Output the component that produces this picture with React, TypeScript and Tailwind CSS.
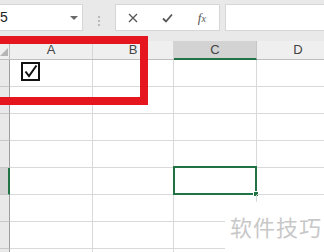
const cols = [
  { name: "A", w: "w-[83px]" },
  { name: "B", w: "w-[81px]" },
  { name: "C", w: "w-[83px]" },
  { name: "D", w: "w-[83px]" },
];

const rows = [1, 2, 3, 4, 5, 6, 7, 8];

const CheckedBox = () => (
  <svg width="19" height="19" viewBox="0 0 19 19" className="mt-[2px] ml-[11px]">
    <rect x="1" y="1" width="17" height="17" fill="none" stroke="#111" strokeWidth="2" />
    <path d="M4.5 9.5 L8 14 L15.5 3.5" fill="none" stroke="#111" strokeWidth="2" />
  </svg>
);

export default function App() {
  return (
    <div className="relative w-[324px] h-[252px] overflow-hidden bg-white font-['Liberation_Sans',sans-serif]">
      {/* formula bar */}
      <div className="flex h-[41px] bg-[#e9e9e9] pt-[4px]">
        <div className="flex h-[27px] w-[83px] shrink-0 items-center overflow-hidden border border-l-0 border-[#d6d6d6] bg-white">
          <span className="ml-[-10px] text-[14px] text-[#222]">C5</span>
          <span className="ml-auto mr-[4px] h-0 w-0 border-x-[4px] border-t-[4px] border-x-transparent border-t-[#6a6a6a]" />
        </div>
        <div className="flex w-[32px] shrink-0 flex-col items-center justify-center gap-[2px] pb-[3px]">
          <span className="h-[2px] w-[2px] bg-[#b9b9b9]" />
          <span className="h-[2px] w-[2px] bg-[#b9b9b9]" />
          <span className="h-[2px] w-[2px] bg-[#b9b9b9]" />
        </div>
        <div className="flex h-[27px] w-[105px] shrink-0 items-center border border-[#d6d6d6] bg-white">
          <span className="flex w-[35px] justify-center">
            <svg width="10" height="10" viewBox="0 0 10 10">
              <path d="M1 1 L9 9 M9 1 L1 9" stroke="#555" strokeWidth="1.3" />
            </svg>
          </span>
          <span className="flex w-[35px] justify-center">
            <svg width="11" height="10" viewBox="0 0 11 10">
              <path d="M1 5.5 L4 8.5 L10 1.5" fill="none" stroke="#555" strokeWidth="1.8" />
            </svg>
          </span>
          <span className="flex w-[35px] justify-center font-['Liberation_Serif',serif] italic text-[13px] text-[#555]">
            f<span className="text-[10px] mt-[3px]">x</span>
          </span>
        </div>
        <div className="ml-[5px] h-[27px] flex-1 border border-r-0 border-[#d6d6d6] bg-white" />
      </div>

      {/* column headers */}
      <div className="flex h-[19px] border-b border-[#bdbdbd] bg-[#efefef]">
        <div className="relative w-[10px] shrink-0 border-r border-[#bdbdbd]">
          <span className="absolute right-[1px] bottom-[3px] h-0 w-0 border-l-[8px] border-b-[8px] border-l-transparent border-b-[#b5b5b5]" />
        </div>
        {cols.map((c) => (
          <div
            key={c.name}
            className={`${c.w} shrink-0 flex items-center justify-center text-[13px] text-[#444] ${
              c.name === "C"
                ? "bg-[#d3d3d3] border-b-2 border-[#217346] border-r border-r-[#c6c6c6] -mb-[1px]"
                : "border-r border-[#d6d6d6]"
            }`}
          >
            {c.name}
          </div>
        ))}
      </div>

      {/* grid */}
      {rows.map((r) => (
        <div key={r} className="flex h-[27px]">
          <div
            className={`w-[10px] shrink-0 border-b border-[#c8c8c8] ${
              r === 5 ? "bg-[#d3d3d3] border-r-2 border-r-[#217346]" : "bg-[#e9e9e9] border-r border-r-[#9e9e9e]"
            }`}
          />
          {cols.map((c) => (
            <div key={c.name} className={`${c.w} relative shrink-0 border-r border-b border-[#d9d9d9]`}>
              {r === 1 && c.name === "A" && <CheckedBox />}
              {r === 5 && c.name === "C" && (
                <div className="absolute -top-[2px] -left-[1px] -right-[1px] -bottom-[1px] border-2 border-[#217346]">
                  <span className="absolute -right-[4px] -bottom-[4px] h-[6px] w-[6px] border border-white bg-[#217346]" />
                </div>
              )}
            </div>
          ))}
        </div>
      ))}

      {/* red annotation frame */}
      <div className="absolute left-[-10px] top-[36px] h-[69px] w-[158px] border-[8px] border-[#e5161d]" />

      {/* watermark */}
      <div className="absolute left-[225px] top-[202px] h-[50px] w-[99px] bg-white pl-[5px] pt-[13px] font-['Noto_Sans_CJK_SC',sans-serif] text-[22px] leading-none tracking-[1px] text-[#c8c8c8]">
        软件技巧
      </div>
    </div>
  );
}
